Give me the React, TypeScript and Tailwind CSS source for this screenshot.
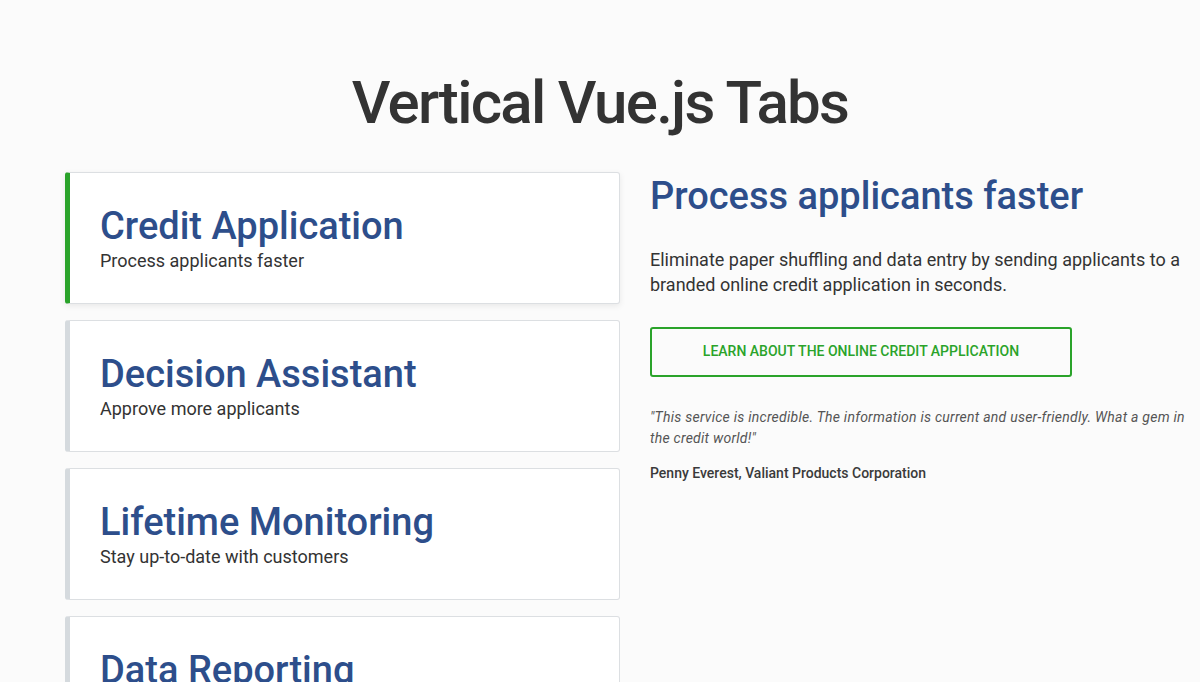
import React, { useState } from "react"

const tabs = [
  {
    id: "credit",
    title: "Credit Application",
    subtitle: "Process applicants faster",
    heading: "Process applicants faster",
    body: "Eliminate paper shuffling and data entry by sending applicants to a branded online credit application in seconds.",
    cta: "Learn about the online credit application",
    quote: "\"This service is incredible. The information is current and user-friendly. What a gem in the credit world!\"",
    author: "Penny Everest, Valiant Products Corporation",
  },
  {
    id: "decision",
    title: "Decision Assistant",
    subtitle: "Approve more applicants",
    heading: "Approve more applicants",
    body: "Make faster, smarter credit decisions with automated scoring and recommendations.",
    cta: "Learn about the decision assistant",
    quote: "\"We approve more customers in less time.\"",
    author: "Penny Everest, Valiant Products Corporation",
  },
  {
    id: "monitoring",
    title: "Lifetime Monitoring",
    subtitle: "Stay up-to-date with customers",
    heading: "Stay up-to-date with customers",
    body: "Get alerts whenever something changes with your customers' credit.",
    cta: "Learn about lifetime monitoring",
    quote: "\"We always know where our customers stand.\"",
    author: "Penny Everest, Valiant Products Corporation",
  },
  {
    id: "reporting",
    title: "Data Reporting",
    subtitle: "Share your trade experience",
    heading: "Share your trade experience",
    body: "Report your trade data and help the whole credit community.",
    cta: "Learn about data reporting",
    quote: "\"Reporting has never been easier.\"",
    author: "Penny Everest, Valiant Products Corporation",
  },
]

const App = () => {
  const [activeTab, setActiveTab] = useState("credit")
  const current = tabs.find((t) => t.id === activeTab) ?? tabs[0]

  return (
    <div
      className="min-h-screen overflow-hidden bg-[#fbfbfb] text-[#333]"
      style={{ fontFamily: "Roboto, 'Liberation Sans', sans-serif" }}
    >
      <h1 className="pt-[67px] pb-[33px] text-center text-[60px] font-medium leading-[1.2] tracking-[-1.7px] text-[#333]">
        Vertical Vue.js Tabs
      </h1>

      <div className="flex gap-[30px] pl-[65px]">
        {/* Tabs */}
        <div className="flex w-[555px] shrink-0 flex-col gap-[16px]">
          {tabs.map((tab) => {
            const active = tab.id === activeTab
            return (
              <button
                key={tab.id}
                type="button"
                onClick={() => setActiveTab(tab.id)}
                className={
                  active
                    ? "h-[132px] shrink-0 rounded-[3px] border border-l-[5px] border-[#dcdfe2] border-l-[#2aa32a] bg-white pl-[30px] text-left shadow-[0_2px_6px_rgba(0,0,0,0.08)]"
                    : "h-[132px] shrink-0 rounded-[3px] border border-l-[5px] border-[#dcdfe2] border-l-[#d5dade] bg-white pl-[30px] text-left"
                }
              >
                <div className="text-[38px] font-medium leading-[1.2] text-[#2d4e8b]">{tab.title}</div>
                <div className="text-[18px] leading-[1.3] text-[#333]">{tab.subtitle}</div>
              </button>
            )
          })}
        </div>

        {/* Content */}
        <div className="w-[550px] shrink-0 pt-[2px]">
          <h2 className="text-[38px] font-medium leading-[1.2] text-[#2d4e8b]">{current.heading}</h2>
          <p className="mt-[27px] text-[18px] leading-[25px] text-[#333]">{current.body}</p>
          <button
            type="button"
            className="mt-[30px] h-[50px] w-[422px] rounded-[3px] border-2 border-[#2aa32a] text-[14px] font-medium uppercase text-[#2aa32a]"
          >
            {current.cta}
          </button>
          <p className="mt-[30px] text-[14px] italic leading-[21px] tracking-[0.25px] text-[#555]">{current.quote}</p>
          <p className="mt-[14px] text-[14px] font-medium leading-[21px] text-[#3a3a3a]">{current.author}</p>
        </div>
      </div>
    </div>
  )
}

export default App
